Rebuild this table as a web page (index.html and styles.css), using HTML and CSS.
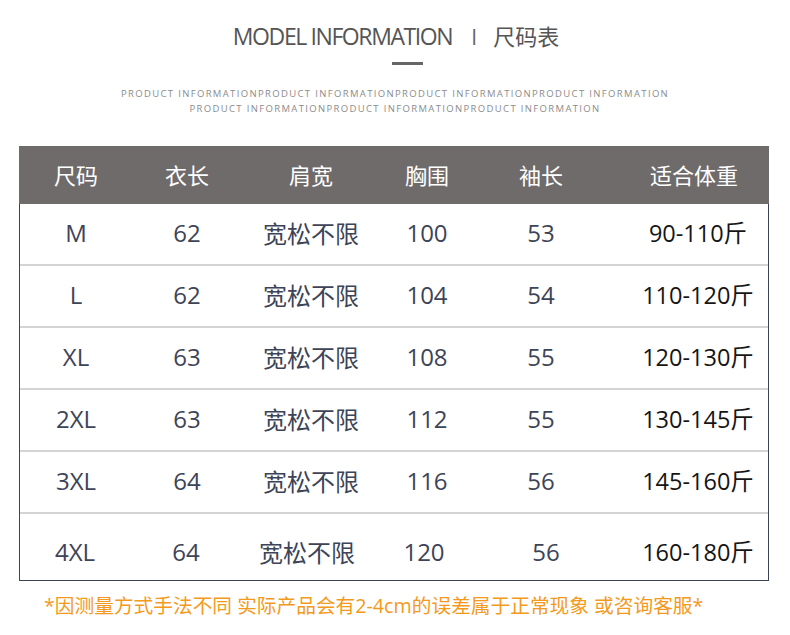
FILE: index.html
```html
<!DOCTYPE html>
<html lang="zh-CN">
<head>
<meta charset="utf-8">
<title>尺码表</title>
<link rel="stylesheet" href="styles.css">
</head>
<body>
<div class="page">
  <header class="head">
    <div class="title">
      <span class="title-en">MODEL INFORMATION</span>
      <span class="title-sep">I</span>
      <span class="title-cn">尺码表</span>
    </div>
    <div class="accent"></div>
    <div class="sub">
      <div class="sub-line">PRODUCT INFORMATIONPRODUCT INFORMATIONPRODUCT INFORMATIONPRODUCT INFORMATION</div>
      <div class="sub-line">PRODUCT INFORMATIONPRODUCT INFORMATIONPRODUCT INFORMATION</div>
    </div>
  </header>

  <div class="table">
    <div class="thead">
      <div class="th">尺码</div>
      <div class="th">衣长</div>
      <div class="th">肩宽</div>
      <div class="th">胸围</div>
      <div class="th">袖长</div>
      <div class="th th-w">适合体重</div>
    </div>
    <div class="tbody">
      <div class="row">
        <div class="td">M</div><div class="td">62</div><div class="td">宽松不限</div><div class="td">100</div><div class="td">53</div><div class="td td-w">90-110斤</div>
      </div>
      <div class="row">
        <div class="td">L</div><div class="td">62</div><div class="td">宽松不限</div><div class="td">104</div><div class="td">54</div><div class="td td-w">110-120斤</div>
      </div>
      <div class="row">
        <div class="td">XL</div><div class="td">63</div><div class="td">宽松不限</div><div class="td">108</div><div class="td">55</div><div class="td td-w">120-130斤</div>
      </div>
      <div class="row">
        <div class="td">2XL</div><div class="td">63</div><div class="td">宽松不限</div><div class="td">112</div><div class="td">55</div><div class="td td-w">130-145斤</div>
      </div>
      <div class="row">
        <div class="td">3XL</div><div class="td">64</div><div class="td">宽松不限</div><div class="td">116</div><div class="td">56</div><div class="td td-w">145-160斤</div>
      </div>
      <div class="row row-last">
        <div class="td">4XL</div><div class="td">64</div><div class="td">宽松不限</div><div class="td">120</div><div class="td">56</div><div class="td td-w">160-180斤</div>
      </div>
    </div>
  </div>

  <p class="note">*因测量方式手法不同 实际产品会有2-4cm的误差属于正常现象 或咨询客服*</p>
</div>
</body>
</html>
```

FILE: styles.css
```css
html, body {
  margin: 0;
  padding: 0;
  background: #ffffff;
}

body {
  font-family: "Open Sans", "Noto Sans CJK SC", sans-serif;
  width: 790px;
  height: 635px;
  overflow: hidden;
}

.page {
  display: flex;
  flex-direction: column;
}

.head {
  display: flex;
  flex-direction: column;
  align-items: center;
}

.title {
  display: flex;
  align-items: baseline;
  margin-top: 19px;
  height: 35px;
  margin-left: 2px;
  color: #555555;
}

.title-en {
  font-size: 23px;
  letter-spacing: -1.4px;
  font-family: "Open Sans", sans-serif;
}

.title-sep {
  font-size: 21px;
  margin: 0 16px 0 19px;
  font-family: "Open Sans", sans-serif;
  color: #666666;
}

.title-cn {
  font-family: "Noto Sans CJK SC", sans-serif;
  font-size: 22px;
}

.accent {
  width: 31px;
  height: 3px;
  background: #666666;
  margin-top: 8px;
  margin-left: 24px;
}

.sub {
  margin-top: 21px;
  display: flex;
  flex-direction: column;
  align-items: center;
}

.sub-line {
  font-size: 9.5px;
  line-height: 15px;
  letter-spacing: 1.35px;
  color: #8c8c8c;
  white-space: nowrap;
}

.table {
  margin: 30px 0 0 19px;
  width: 750px;
}

.thead {
  display: grid;
  grid-template-columns: 112px 110px 138px 94px 134px 160px;
  height: 58px;
  padding: 0 1px;
  background: #6f6b6b;
  align-items: center;
}

.th {
  color: #ffffff;
  font-family: "Noto Sans CJK SC", sans-serif;
  font-size: 22px;
  text-align: center;
  margin-top: -2px;
}

.th-w {
  padding-left: 12px;
}

.tbody {
  border: 1px solid #3c4356;
  border-top: none;
}

.row {
  display: grid;
  grid-template-columns: 112px 110px 138px 94px 134px 160px;
  height: 60px;
  border-bottom: 2px solid #d5d5d5;
  align-items: center;
}

.row-last {
  grid-template-columns: 110px 112px 130px 104px 140px 152px;
  height: 66px;
  border-bottom: none;
  padding-top: 12px;
  box-sizing: border-box;
}

.td {
  text-align: center;
  color: #3d4457;
  font-size: 24px;
  white-space: nowrap;
  margin-top: -4px;
}

.td-w {
  padding-left: 20px;
  color: #151515;
  font-size: 23.5px;
}

.row-last .td-w {
  padding-left: 12px;
}

.note {
  margin: 9px 0 0 44px;
  color: #f39a1e;
  font-size: 19.7px;
  white-space: nowrap;
}
```
